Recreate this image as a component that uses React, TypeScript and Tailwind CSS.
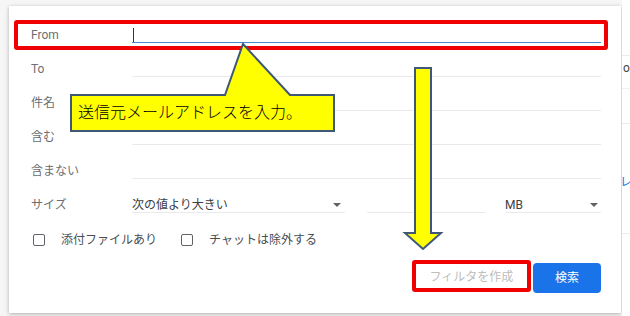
import React from "react";

const font = { fontFamily: 'Roboto, "Noto Sans CJK JP", sans-serif' };

function Row({ label, children }: { label: string; children?: React.ReactNode }) {
  return (
    <div className="flex h-[34px] items-center">
      <div className="w-[101px] text-[12px] text-[#6b6e72]">{label}</div>
      {children ?? <div className="h-[16px] flex-1 border-b border-[#e8eaed]" />}
    </div>
  );
}

function Caret() {
  return (
    <svg width="8" height="4" viewBox="0 0 8 4" className="shrink-0">
      <path d="M0 0h8L4 4z" fill="#5f6368" />
    </svg>
  );
}

function Checkbox({ label }: { label: string }) {
  return (
    <div className="flex items-center">
      <div className="h-[12px] w-[12px] rounded-[2px] border-[1.5px] border-[#5f6368]" />
      <span className="ml-[16px] text-[12px] text-[#4a4d51]">{label}</span>
    </div>
  );
}

export default function App() {
  return (
    <div className="relative h-[316px] w-[630px] overflow-hidden bg-[#f6f6f6]" style={font}>
      {/* page behind the dialog */}
      <div className="absolute left-[622px] top-0 h-full w-[8px] bg-white">
        <div className="absolute left-0 top-[55px] h-px w-full bg-[#ececec]" />
        <div className="absolute left-0 top-[88px] h-px w-full bg-[#f0f0f0]" />
        <div className="absolute left-0 top-[123px] h-px w-full bg-[#ececec]" />
        <div className="absolute left-0 top-[233px] h-px w-full bg-[#ececec]" />
        <span className="absolute left-[1px] top-[62px] text-[12px] leading-none text-[#444]">ol</span>
        <span className="absolute left-[-2px] top-[176px] text-[12px] leading-none text-[#1a73e8]">レ</span>
      </div>

      {/* search dialog */}
      <div className="ml-[9px] mt-[6px] flex h-[307px] w-[612px] flex-col bg-white pl-[22px] pr-[20px] pt-[12px] shadow-[0_1px_4px_rgba(0,0,0,0.3)]">
        <Row label="From">
          <div className="relative h-[16px] flex-1 border-b border-[#4a86d0]">
            <div className="absolute left-[1px] top-[1px] h-[14px] w-px bg-[#333]" />
          </div>
        </Row>
        <Row label="To" />
        <Row label="件名" />
        <Row label="含む" />
        <Row label="含まない" />
        <Row label="サイズ">
          <div className="flex h-[16px] w-[213px] items-center justify-between border-b border-[#e8eaed] pr-[4px] text-[12px] text-[#3c4043]">
            <span>次の値より大きい</span>
            <Caret />
          </div>
          <div className="ml-[22px] h-[16px] w-[118px] border-b border-[#e8eaed]" />
          <div className="ml-[20px] flex h-[16px] flex-1 items-center justify-between border-b border-[#e8eaed] pr-[3px] text-[12px] text-[#3c4043]">
            <span>MB</span>
            <Caret />
          </div>
        </Row>
        <div className="flex h-[36px] items-center gap-[24px] pl-[2px]">
          <Checkbox label="添付ファイルあり" />
          <Checkbox label="チャットは除外する" />
        </div>
        <div className="mt-[5px] flex items-start justify-end gap-[6px]">
          <button className="mt-[1px] h-[26px] w-[111px] text-[12px] text-[#bdbdbd]">フィルタを作成</button>
          <button className="h-[30px] w-[68px] rounded-[4px] bg-[#1a73e8] text-[12px] text-white">検索</button>
        </div>
      </div>

      {/* annotations */}
      <div className="absolute left-[14px] top-[20px] h-[30px] w-[594px] rounded-[3px] border-4 border-[#f00000]" />
      <div className="absolute left-[412px] top-[260px] h-[32px] w-[119px] rounded-[3px] border-4 border-[#f00000]" />
      <svg className="pointer-events-none absolute left-0 top-0" width="630" height="316" viewBox="0 0 630 316">
        <polygon
          points="71,95 225,95 243,44 290,95 334,95 334,131 71,131"
          fill="#ffff00"
          stroke="#3f5877"
          strokeWidth="2"
          strokeLinejoin="miter"
        />
        <polygon
          points="415,68 431,68 431,233 441,233 423,249 405,233 415,233"
          fill="#ffff00"
          stroke="#3f5877"
          strokeWidth="2"
        />
      </svg>
      <div className="absolute left-[72px] top-[96px] flex h-[34px] w-[261px] items-center pl-[6px] text-[16px] font-light text-black">
        送信元メールアドレスを入力。
      </div>
    </div>
  );
}
